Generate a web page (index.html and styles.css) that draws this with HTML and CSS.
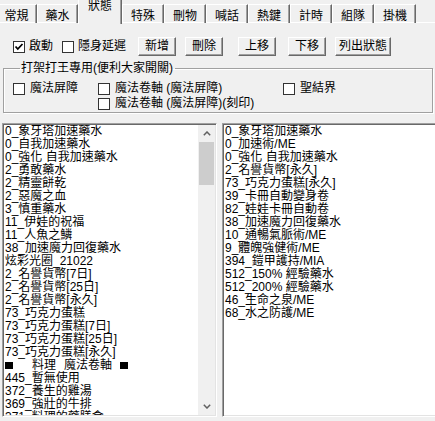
FILE: index.html
```html
<!DOCTYPE html>
<html lang="zh-Hant">
<head>
  <meta charset="UTF-8">
  <title>狀態</title>
  <link rel="stylesheet" href="styles.css">
</head>
<body>
  <div class="tabs">
    <div class="tab first">常規</div>
    <div class="tab">藥水</div>
    <div class="tab active">狀態</div>
    <div class="tab">特殊</div>
    <div class="tab">刪物</div>
    <div class="tab">喊話</div>
    <div class="tab">熱鍵</div>
    <div class="tab">計時</div>
    <div class="tab">組隊</div>
    <div class="tab">掛機</div>
  </div>

  <div class="toolbar">
    <label class="check">
      <span class="box"><svg width="10" height="10" viewBox="0 0 10 10"><polyline points="1.5,4.5 3.8,7 8.5,2" fill="none" stroke="#000" stroke-width="1.8"/></svg></span>啟動
    </label>
    <label class="check"><span class="box"></span>隱身延遲</label>
    <button class="btn">新增</button>
    <button class="btn">刪除</button>
    <button class="btn">上移</button>
    <button class="btn">下移</button>
    <button class="btn wide">列出狀態</button>
  </div>

  <fieldset class="group">
    <legend>打架打王專用(便利大家開關)</legend>
    <div class="opts">
      <label class="check"><span class="box"></span>魔法屏障</label>
      <label class="check"><span class="box"></span>魔法卷軸 (魔法屏障)</label>
      <label class="check"><span class="box"></span>聖結界</label>
      <span></span>
      <label class="check"><span class="box"></span>魔法卷軸 (魔法屏障)(刻印)</label>
    </div>
  </fieldset>

  <div class="lists">
    <div class="list left">
      <ul class="items">
        <li>0_象牙塔加速藥水</li>
        <li>0_自我加速藥水</li>
        <li>0_強化 自我加速藥水</li>
        <li>2_勇敢藥水</li>
        <li>2_精靈餅乾</li>
        <li>2_惡魔之血</li>
        <li>3_慎重藥水</li>
        <li>11_伊娃的祝福</li>
        <li>11_人魚之鱗</li>
        <li>38_加速魔力回復藥水</li>
        <li>炫彩光圈_21022</li>
        <li>2_名譽貨幣[7日]</li>
        <li>2_名譽貨幣[25日]</li>
        <li>2_名譽貨幣[永久]</li>
        <li>73_巧克力蛋糕</li>
        <li>73_巧克力蛋糕[7日]</li>
        <li>73_巧克力蛋糕[25日]</li>
        <li>73_巧克力蛋糕[永久]</li>
        <li class="heading"><span class="blk"></span><span class="h1">料理</span><span class="h2">魔法卷軸</span><span class="blk"></span></li>
        <li>445_暫無使用</li>
        <li>372_養生的雞湯</li>
        <li>369_強壯的牛排</li>
        <li>371_料理的藥膳食</li>
      </ul>
      <div class="vscroll">
        <div class="arrow"><svg width="8" height="5" viewBox="0 0 8 5"><polyline points="0.8,4.2 4,1 7.2,4.2" fill="none" stroke="#606060" stroke-width="1.5"/></svg></div>
        <div class="track"><div class="thumb"></div></div>
        <div class="arrow"><svg width="8" height="5" viewBox="0 0 8 5"><polyline points="0.8,0.8 4,4 7.2,0.8" fill="none" stroke="#606060" stroke-width="1.5"/></svg></div>
      </div>
    </div>

    <div class="list right">
      <ul class="items">
        <li>0_象牙塔加速藥水</li>
        <li>0_加速術/ME</li>
        <li>0_強化 自我加速藥水</li>
        <li>2_名譽貨幣[永久]</li>
        <li>73_巧克力蛋糕[永久]</li>
        <li>39_卡冊自動變身卷</li>
        <li>82_娃娃卡冊自動卷</li>
        <li>38_加速魔力回復藥水</li>
        <li>10_通暢氣脈術/ME</li>
        <li>9_體魄強健術/ME</li>
        <li>394_鎧甲護持/MIA</li>
        <li>512_150% 經驗藥水</li>
        <li>512_200% 經驗藥水</li>
        <li>46_生命之泉/ME</li>
        <li>68_水之防護/ME</li>
      </ul>
    </div>
  </div>
</body>
</html>
```

FILE: styles.css
```css
* {
  box-sizing: border-box;
  margin: 0;
  padding: 0;
}
body {
  font-family: 'Liberation Sans', 'Noto Sans CJK TC', sans-serif;
  font-size: 12px;
  line-height: 13px;
  color: #000;
  background: #f0f0f0;
  width: 435px;
  height: 421px;
  overflow: hidden;
}

/* tab strip */
.tabs {
  display: flex;
  height: 23px;
  border-bottom: 1px solid #fff;
}
.tab {
  width: 42px;
  height: 19px;
  margin-top: 4px;
  padding-top: 5px;
  text-align: center;
  border-top: 1px solid #fff;
  border-left: 1px solid #fff;
  border-right: 1px solid #696969;
  box-shadow: inset -1px 0 0 #a0a0a0;
}
.tab.first {
  width: 41px;
  margin-left: -4px;
}
.tab:nth-child(2) {
  width: 41px;
}
.tab.active {
  width: 44px;
  height: 24px;
  margin-top: 0;
  padding-top: 0;
  border-top: none;
  position: relative;
  background: #f0f0f0;
}

/* toolbar row */
.toolbar {
  display: flex;
  align-items: center;
  height: 19px;
  margin-top: 14px;
  padding-left: 13px;
}
.check {
  display: flex;
  align-items: center;
  gap: 4px;
  white-space: nowrap;
}
.toolbar .check + .check {
  margin-left: 9px;
}
.box {
  width: 12px;
  height: 12px;
  background: #fff;
  border: 1px solid #333;
  display: flex;
  align-items: center;
  justify-content: center;
}
.btn {
  width: 38px;
  height: 19px;
  font: inherit;
  background: #f0f0f0;
  border: 1px solid;
  border-color: #fff #696969 #696969 #fff;
  box-shadow: inset -1px -1px 0 #a0a0a0;
  margin-left: 12px;
}
.btn:nth-of-type(2) { margin-left: 9px; }
.btn:nth-of-type(3) { margin-left: 15px; }
.btn:nth-of-type(4) { margin-left: 12px; }
.btn:nth-of-type(5) { margin-left: 9px; }
.btn.wide {
  width: 56px;
}

/* group box */
.group {
  margin: 6px 2px 0 3px;
  border: 1px solid #a0a0a0;
  box-shadow: inset 1px 1px 0 #fff, 1px 1px 0 #fff;
  padding: 6px 0 1px 9px;
}
.group legend {
  margin-left: 7px;
  padding: 0 2px 0 1px;
}
.opts {
  display: grid;
  grid-template-columns: 85px 185px auto;
  grid-auto-rows: 15px;
  align-items: center;
}
.opts .check {
  gap: 5px;
}

/* list boxes */
.lists {
  display: flex;
  gap: 5px;
  margin-top: 10px;
  padding-left: 2px;
}
.list {
  height: 294px;
  background: #fff;
  display: flex;
  border: 1px solid;
  border-color: #a0a0a0 #fff #fff #a0a0a0;
  box-shadow: inset 1px 1px 0 #696969, inset -1px -1px 0 #e3e3e3;
  padding: 1px;
  flex-shrink: 0;
}
.list.left {
  width: 215px;
}
.list.right {
  width: 220px;
}
.items {
  list-style: none;
  flex: 1;
  overflow: hidden;
  padding-left: 1px;
}
.items li {
  height: 13px;
  white-space: nowrap;
}
.heading {
  display: flex;
  align-items: center;
}
.blk {
  display: inline-block;
  width: 8px;
  height: 7px;
  background: #000;
}
.heading .h1 {
  margin-left: 19px;
}
.heading .h2 {
  margin: 0 8px;
}

/* scrollbar of the left list */
.vscroll {
  width: 17px;
  background: #f0f0f0;
  display: flex;
  flex-direction: column;
}
.arrow {
  height: 17px;
  display: flex;
  align-items: center;
  justify-content: center;
}
.track {
  flex: 1;
}
.thumb {
  height: 43px;
  margin: 0 1px;
  background: #cdcdcd;
}
```
